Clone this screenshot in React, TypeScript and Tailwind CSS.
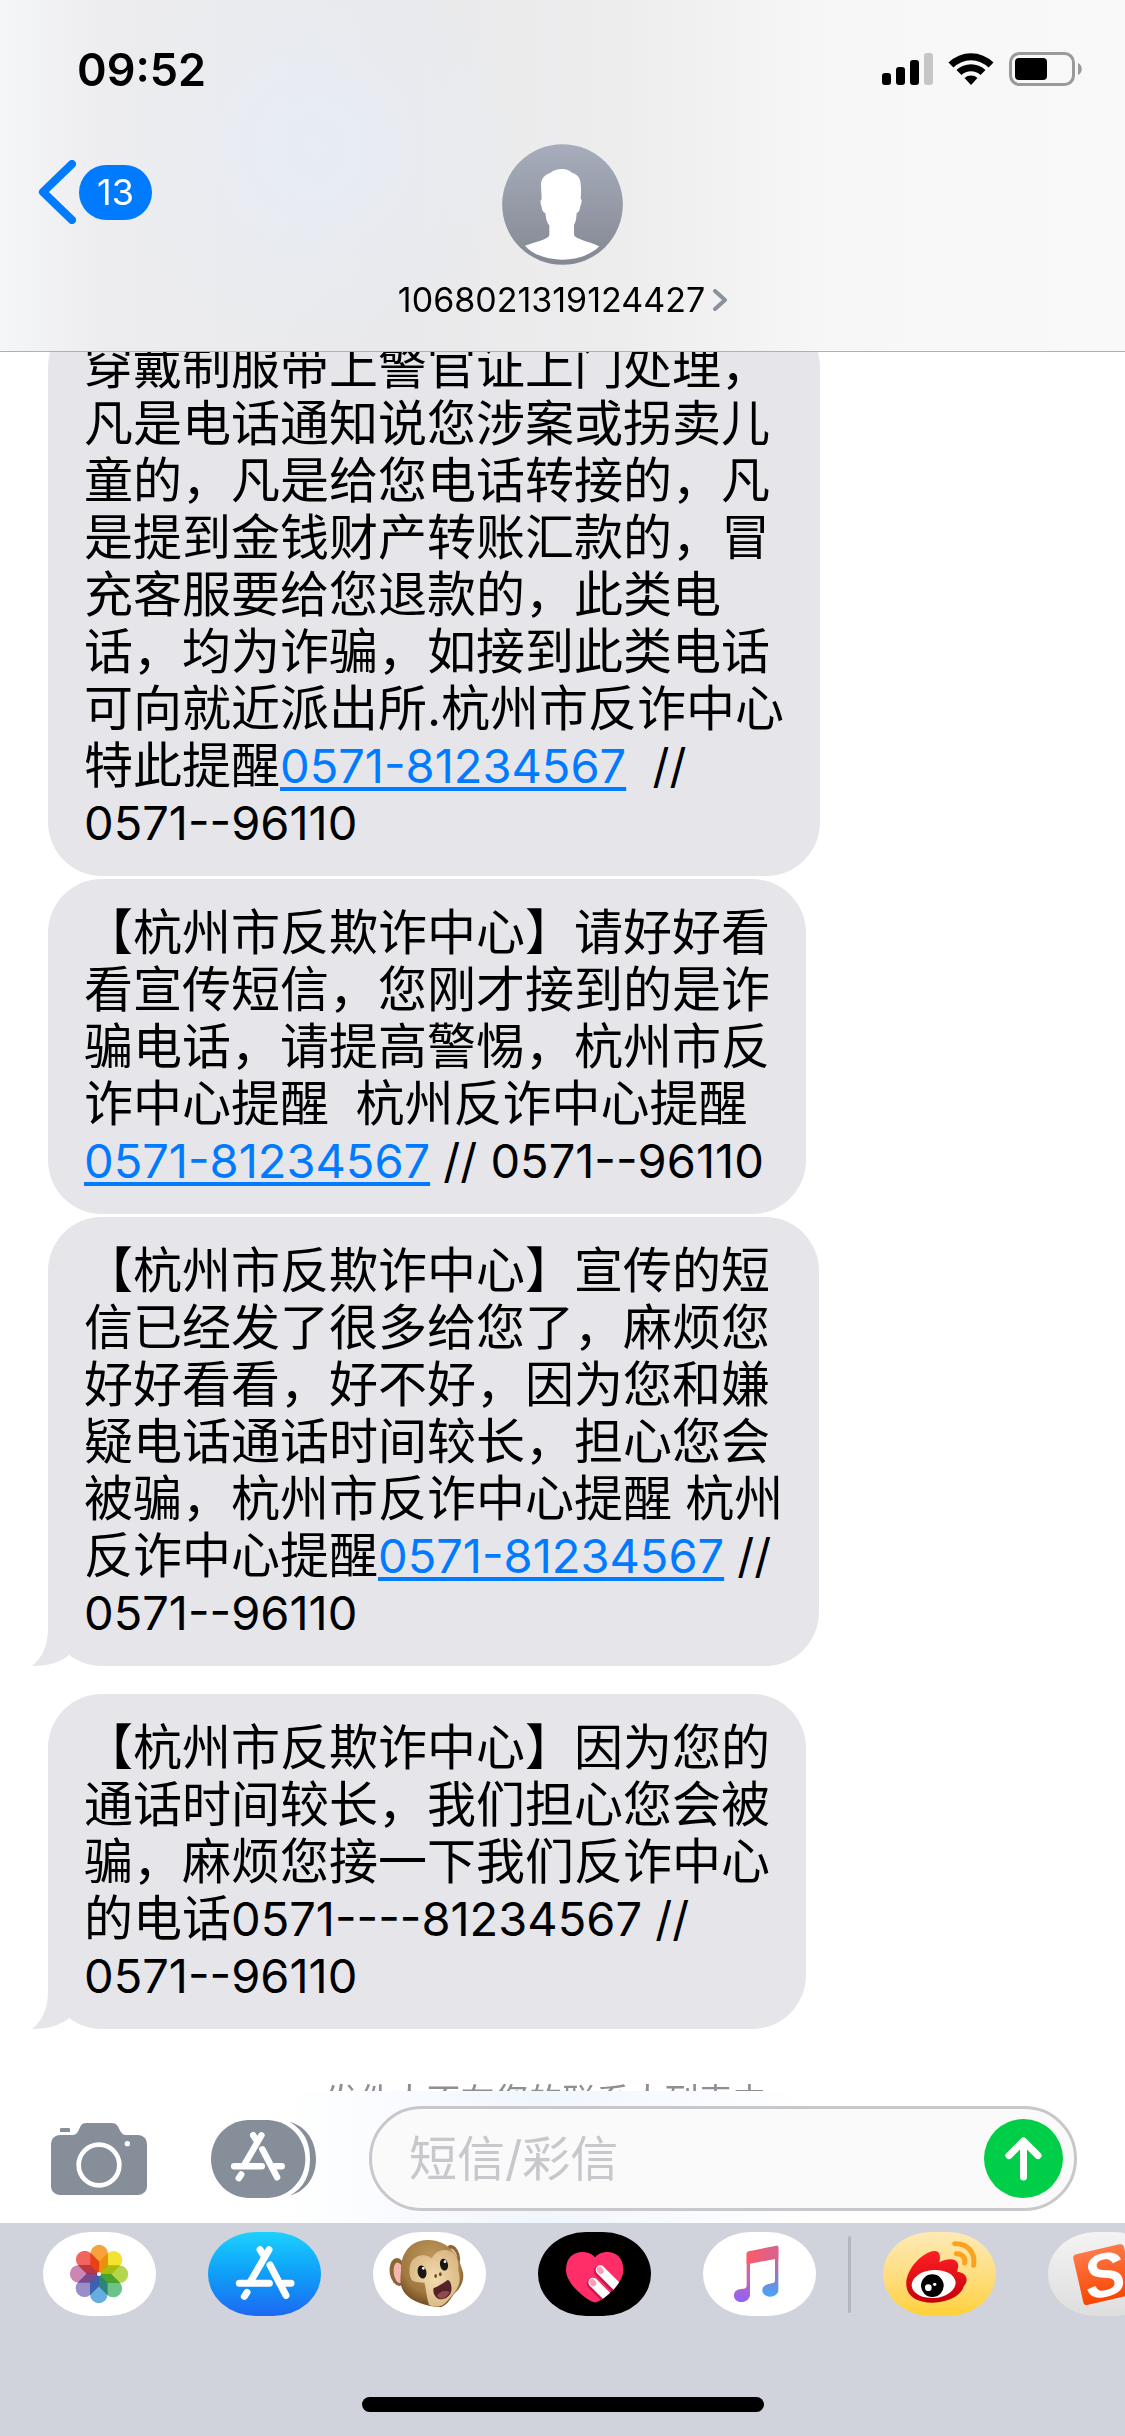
import React from 'react';

interface Message {
  id: string;
  lines: React.ReactNode[];
  hasTail?: boolean;
  className?: string;
}

interface DrawerApp {
  label: string;
  background: string;
  art: React.ReactNode;
}

const Num: React.FC<{ children: React.ReactNode }> = ({ children }) => (
  <span className="font-['Inter','Noto_Sans_CJK_SC',sans-serif] text-[47px]">{children}</span>
);

const PhoneLink: React.FC = () => (
  <a
    href="tel:0571-81234567"
    className="font-['Inter',sans-serif] text-[47px] text-[#007aff] underline decoration-4 underline-offset-4"
  >
    0571-81234567
  </a>
);

const MESSAGES: readonly Message[] = [
  {
    id: 'warning',
    className: 'mb-[3px]',
    lines: [
      '穿戴制服带上警官证上门处理，',
      '凡是电话通知说您涉案或拐卖儿',
      '童的，凡是给您电话转接的，凡',
      '是提到金钱财产转账汇款的，冒',
      '充客服要给您退款的，此类电',
      '话，均为诈骗，如接到此类电话',
      '可向就近派出所.杭州市反诈中心',
      <>特此提醒<PhoneLink /><Num>{'  //'}</Num></>,
      <Num>0571--96110</Num>
    ]
  },
  {
    id: 'notice',
    className: 'mb-[3px]',
    lines: [
      '【杭州市反欺诈中心】请好好看',
      '看宣传短信，您刚才接到的是诈',
      '骗电话，请提高警惕，杭州市反',
      <>诈中心提醒<Num>{'  '}</Num>杭州反诈中心提醒</>,
      <><PhoneLink /><Num>{' // 0571--96110'}</Num></>
    ]
  },
  {
    id: 'follow-up',
    hasTail: true,
    className: 'mb-7',
    lines: [
      '【杭州市反欺诈中心】宣传的短',
      '信已经发了很多给您了，麻烦您',
      '好好看看，好不好，因为您和嫌',
      '疑电话通话时间较长，担心您会',
      <>被骗，杭州市反诈中心提醒<Num> </Num>杭州</>,
      <>反诈中心提醒<PhoneLink /><Num>{' //'}</Num></>,
      <Num>0571--96110</Num>
    ]
  },
  {
    id: 'callback',
    hasTail: true,
    lines: [
      '【杭州市反欺诈中心】因为您的',
      '通话时间较长，我们担心您会被',
      '骗，麻烦您接一下我们反诈中心',
      <>的电话<Num>{'0571----81234567 //'}</Num></>,
      <Num>0571--96110</Num>
    ]
  }
];

const StatusIcons: React.FC = () => (
  <div className="flex items-center gap-[15px]">
    {/* Signal */}
    <svg className="w-[51px] h-[34px]" viewBox="0 0 51 34" aria-label="信号">
      <rect x="0" y="21" width="9" height="12" rx="3" />
      <rect x="14" y="15" width="9" height="18" rx="3" />
      <rect x="28" y="8" width="9" height="25" rx="3" />
      <rect x="42" y="1" width="9" height="32" rx="3" fill="#c6c6c7" />
    </svg>
    {/* Wi-Fi */}
    <svg className="w-[46px] h-[34px]" viewBox="0 0 46 34" aria-label="Wi-Fi">
      <path d="M0.5 10.5a32 32 0 0 1 45 0L40.500 15.500a25 25 0 0 0-35 0Z" />
      <path d="M8.500 18a21 21 0 0 1 29 0L32.500 23a14 14 0 0 0-19 0Z" />
      <path d="M16.500 26a10 10 0 0 1 13 0L23 33Z" />
    </svg>
    {/* Battery */}
    <svg className="w-[74px] h-[34px]" viewBox="0 0 74 34" aria-label="电量">
      <rect x="1.500" y="1.500" width="63" height="31" rx="9" fill="none" stroke="#999a9b" strokeWidth="3" />
      <rect x="6" y="6" width="32" height="22" rx="4" />
      <path d="M69 11c5 2 5 10 0 12Z" fill="#999a9b" />
    </svg>
  </div>
);

const Avatar: React.FC = () => (
  <svg className="w-[121px] h-[121px]" viewBox="0 0 363 363" aria-hidden="true">
    <defs>
      <linearGradient id="avatar" x1="0" y1="0" x2="0" y2="1">
        <stop offset="0" stopColor="#a7adbc" />
        <stop offset="1" stopColor="#848892" />
      </linearGradient>
    </defs>
    <circle cx="181.500" cy="181.500" r="181" fill="url(#avatar)" />
    <path
      d="M181 75c-14 0-28 4-37 12c-16 5-27 18-27 36l2 43c-6 3-3 14 0 24c1 9 4 16 11 17c3 20 4 28 12 37v28c0 13-38 20-73 33c24 28 70 42 113 42c44 0 85-15 110-40c-30-14-76-22-76-36v-28c7-12 7-24 8-36c8-2 9-10 11-20c4-10 6-20 1-22c2-26 2-52-5-64c-6-9-13-12-20-14c-9-8-18-12-30-12Z"
      fill="#fff"
    />
  </svg>
);

const CameraIcon: React.FC = () => (
  <svg className="w-24 h-[72px]" viewBox="0 0 288 216" aria-hidden="true">
    <path
      d="M26 36h38c18 0 18-16 25-27c4-7 9-9 17-9h76c9 0 14 3 18 9c8 13 10 27 25 27h37a26 26 0 0 1 26 26v127a26 26 0 0 1-26 27H26a26 26 0 0 1-26-27V62a26 26 0 0 1 26-26Z"
      fill="#868e99"
    />
    <path d="M27 27V19q0-4 4-4h22q4 0 4 4v8Z" fill="#868e99" />
    <circle cx="144" cy="126" r="61" fill="none" stroke="#fff" strokeWidth="14" />
    <circle cx="229" cy="62" r="8" fill="#fff" />
  </svg>
);

const StoreMark: React.FC = () => (
  <g fill="none" stroke="#fff" strokeWidth="21" strokeLinecap="round">
    <path d="M183 53L128 148M156 53l11 17" />
    <path d="M94 154H184" />
    <path d="M226 154h23" />
    <path d="M186 99L234 190" />
    <path d="M117 181l-8 12" />
  </g>
);

const AppsIcon: React.FC = () => (
  <svg className="w-[105px] h-[78px]" viewBox="0 0 315 234" aria-hidden="true">
    <path d="M110 0h62C238 4 283 56 283 117S238 230 172 234h-62C45 230 0 178 0 117S45 4 110 0Z" fill="#868e99" />
    <path d="M237 6C288 20 315 66 315 117S288 212 237 227C280 202 297 166 297 117S280 32 237 6Z" fill="#868e99" />
    <g transform="translate(-17 -3) scale(0.92)">
      <StoreMark />
    </g>
  </svg>
);

const PETALS = ['#f7a23a', '#f3e230', '#b3d54f', '#6cc389', '#66aee0', '#998dca', '#cb86b4', '#f0665f'];

const PhotosArt = (
  <g className="isolate">
    {PETALS.map((color, index) => (
      <path
        key={color}
        d="M168 126L142 100V65a26 26 0 0 1 53 0v35Z"
        fill={color}
        transform={`rotate(${index * 45} 168 126)`}
        className="mix-blend-multiply"
      />
    ))}
    <circle cx="168" cy="126" r="6" fill="#fff" />
  </g>
);

const MonkeyArt = (
  <g>
    <defs>
      <radialGradient id="fur" cx="0.5" cy="0.3" r="0.7">
        <stop offset="0" stopColor="#c19a5f" />
        <stop offset="0.7" stopColor="#a07840" />
        <stop offset="1" stopColor="#6f4a20" />
      </radialGradient>
      <radialGradient id="face" cx="0.5" cy="0.5" r="0.6">
        <stop offset="0" stopColor="#f3dcae" />
        <stop offset="1" stopColor="#d7b580" />
      </radialGradient>
    </defs>
    <ellipse cx="75" cy="120" rx="25" ry="42" fill="#8c6635" transform="rotate(-8 75 120)" />
    <ellipse cx="77" cy="122" rx="15" ry="31" fill="#f2b5b0" transform="rotate(-8 77 122)" />
    <ellipse cx="240" cy="72" rx="20" ry="34" fill="#8c6635" transform="rotate(-16 240 72)" />
    <ellipse cx="240" cy="74" rx="12" ry="25" fill="#f2b5b0" transform="rotate(-16 240 74)" />
    <path
      d="M162 24C110 26 82 66 84 118c-4 30-2 52 16 70c18 20 60 36 104 37c20-6 30-28 42-42c20-18 28-42 24-62c-6-24-14-44-30-62c-20-24-46-36-78-35Z"
      fill="url(#fur)"
    />
    <path
      d="M176 80c-14-16-46-14-60 8c-10 18-8 44 0 56c10 8 28 8 38 8c6 20 6 44 14 66c12 8 34 8 46-2c14-14 34-34 42-54c8-20 2-36 0-52c2-26-6-48-28-54c-22-6-42 4-52 24Z"
      fill="url(#face)"
    />
    <ellipse cx="147" cy="120" rx="13" ry="20" fill="#1b1715" transform="rotate(-12 147 120)" />
    <ellipse cx="213" cy="98" rx="12" ry="18" fill="#1b1715" transform="rotate(-12 213 98)" />
    <circle cx="151" cy="109" r="4" fill="#fff" />
    <circle cx="216" cy="89" r="4" fill="#fff" />
    <ellipse cx="188" cy="132" rx="4" ry="6" fill="#6a4b2b" />
    <ellipse cx="202" cy="127" rx="4" ry="6" fill="#6a4b2b" />
    <path d="M182 168c12-4 28-14 42-24c10 2 14 22 10 36c-4 14-18 22-32 22c-16-2-24-22-20-34Z" fill="#55222a" />
    <path d="M192 190c10-12 24-16 38-10c-6 14-18 20-28 20c-5-2-8-5-10-10Z" fill="#8e4a50" />
  </g>
);

const HEART = 'M171 76C154 52 84 48 84 114C84 156 144 202 164 209q7 3 14 0C198 202 256 156 256 114C256 48 188 52 171 76Z';

const HeartArt = (
  <g>
    <clipPath id="heart">
      <path d={HEART} />
    </clipPath>
    <path d={HEART} fill="#ff2d68" />
    <g clipPath="url(#heart)" strokeLinecap="round">
      <path d="M184 118L250 184M163 155L229 221" stroke="#c8184e" strokeWidth="34" />
      <path d="M187 114L250 177M165 151L229 215" stroke="#fff" strokeWidth="28" />
      <path d="M185 113l3 4M163 150l3 4" stroke="#ff9fbd" strokeWidth="18" />
    </g>
  </g>
);

const MusicArt = (
  <g>
    <defs>
      <linearGradient id="noteLeft" x1="0" y1="41" x2="0" y2="210" gradientUnits="userSpaceOnUse">
        <stop offset="0.2" stopColor="#f95d6e" />
        <stop offset="0.6" stopColor="#c964b0" />
        <stop offset="1" stopColor="#8a62ff" />
      </linearGradient>
      <linearGradient id="noteRight" x1="0" y1="41" x2="0" y2="195" gradientUnits="userSpaceOnUse">
        <stop offset="0" stopColor="#ee5c78" />
        <stop offset="0.5" stopColor="#9a76bd" />
        <stop offset="1" stopColor="#42a6fd" />
      </linearGradient>
      <linearGradient id="noteBeam" x1="0" y1="0" x2="1" y2="0">
        <stop offset="0" stopColor="#fa5c68" />
        <stop offset="1" stopColor="#d8628f" />
      </linearGradient>
    </defs>
    <path d="M131 64h10v124c0 12-12 22-26 22c-13 0-22-8-22-19c0-14 10-19 22-20c12-1 16-3 16-11Z" fill="url(#noteLeft)" />
    <path d="M216 46h10v128c0 12-11 20-25 20c-13 0-23-8-23-19c0-12 10-18 22-20c12-1 16-3 16-11Z" fill="url(#noteRight)" />
    <path d="M131 95V65q0-6 6-7L220 41q6-1 6 5V82l-9-1L141 95Z" fill="url(#noteBeam)" />
  </g>
);

const WeiboArt = (
  <g>
    <defs>
      <linearGradient id="weibo" x1="0" y1="0" x2="0" y2="1">
        <stop offset="0" stopColor="#ff2027" />
        <stop offset="1" stopColor="#c50008" />
      </linearGradient>
    </defs>
    <path
      d="M70 160C66 120 110 64 152 57c18-2 22 14 17 34c22-12 50-14 56 4c3 9-3 16-2 24c16 2 28 10 28 24c0 8-4 14-9 20C236 190 196 212 148 212C104 212 72 194 70 160Z"
      fill="url(#weibo)"
    />
    <ellipse cx="152" cy="156" rx="66" ry="42" fill="#fff" transform="rotate(-5 152 156)" />
    <circle cx="148" cy="161" r="34" />
    <circle cx="136" cy="167" r="10" fill="#fff" />
    <circle cx="155" cy="157" r="5" fill="#fff" />
    <g fill="none" stroke="#fca21f" strokeWidth="15" strokeLinecap="round">
      <path d="M215 35C252 33 278 60 272 100" />
      <path d="M220 65c17-1 29 12 25 28" />
    </g>
  </g>
);

const SogouArt = (
  <g transform="rotate(-13 166 128)">
    <defs>
      <linearGradient id="sogou" x1="0" y1="0" x2="0" y2="1">
        <stop offset="0" stopColor="#ff7848" />
        <stop offset="1" stopColor="#f74600" />
      </linearGradient>
    </defs>
    <rect x="89" y="50" width="156" height="156" rx="12" fill="url(#sogou)" />
    <text
      x="168"
      y="193"
      textAnchor="middle"
      fill="#fff"
      className="font-['Liberation_Sans',Arial,sans-serif] text-[184px] font-bold italic"
    >
      S
    </text>
  </g>
);

const BUILT_IN_APPS: readonly DrawerApp[] = [
  { label: '照片', background: 'bg-white', art: PhotosArt },
  { label: 'App Store', background: 'bg-linear-to-b from-[#1fd0fd] to-[#1d68f1]', art: <StoreMark /> },
  { label: '拟我表情', background: 'bg-white', art: MonkeyArt },
  { label: 'Digital Touch', background: 'bg-black', art: HeartArt },
  { label: '音乐', background: 'bg-white', art: MusicArt }
];

const INSTALLED_APPS: readonly DrawerApp[] = [
  { label: '微博', background: 'bg-linear-to-b from-[#fdeab5] to-[#ffd133]', art: WeiboArt },
  { label: '搜狗输入法', background: 'bg-linear-to-b from-[#f3f3f3] to-[#dedede]', art: SogouArt }
];

const AppButtons: React.FC<{ apps: readonly DrawerApp[] }> = ({ apps }) => (
  <div className="flex shrink-0 gap-[52px]">
    {apps.map((app) => (
      <button
        key={app.label}
        type="button"
        aria-label={app.label}
        className={`w-[113px] h-[84px] shrink-0 overflow-hidden rounded-[48px/42px] ${app.background}`}
      >
        <svg className="w-full h-full" viewBox="0 0 339 252" aria-hidden="true">
          {app.art}
        </svg>
      </button>
    ))}
  </div>
);

const Bubble: React.FC<{ message: Message }> = ({ message }) => (
  <article
    className={`relative w-fit rounded-[54px] bg-[#e5e5ea] px-[36px] py-[25px] text-[49px] leading-[57px] ${message.className ?? ''}`}
  >
    {message.lines.map((line, index) => (
      <p key={index} className="h-[57px] whitespace-pre">{line}</p>
    ))}
    {message.hasTail && (
      <svg className="absolute -left-4 bottom-0 w-[60px] h-[60px]" viewBox="0 0 60 60" aria-hidden="true">
        <path d="M16 0V22C16 40 10 52 0 60C14 60 28 57 37 49L46 0Z" fill="#e5e5ea" />
      </svg>
    )}
  </article>
);

const App: React.FC = () => {
  return (
    <div
      lang="zh-CN"
      className="flex h-screen flex-col overflow-hidden bg-white font-['Inter','Noto_Sans_CJK_SC',sans-serif] text-black"
    >
      <header className="shrink-0 border-b border-[#b0b0b3] bg-[radial-gradient(circle_at_28%_42%,#e7ecf5_0%,#e7ecf500_24%),linear-gradient(90deg,#f5f6f7_0%,#ededef_9%,#e9e9eb_35%,#ededee_55%,#f7f7f8_74%,#f9f9f9_100%)]">
        {/* Status bar */}
        <div className="flex h-[138px] items-center justify-between pl-[77px] pr-[42px]">
          <time className="text-[45px] font-semibold leading-none">09:52</time>
          <StatusIcons />
        </div>

        {/* Conversation bar */}
        <div className="grid grid-cols-[1fr_auto_1fr] items-start pt-[6px] pb-[28px]">
          <button type="button" aria-label="返回" className="mt-4 ml-[37px] flex items-center gap-[3px] justify-self-start">
            <svg className="w-[39px] h-[64px]" viewBox="0 0 39 64" fill="none" aria-hidden="true">
              <path d="M35 4L6 32L35 60" stroke="#007aff" strokeWidth="8" strokeLinecap="round" strokeLinejoin="round" />
            </svg>
            <span className="flex h-[55px] w-[73px] items-center justify-center rounded-full bg-[#007aff] text-[36px] leading-none text-white">
              13
            </span>
          </button>
          <button type="button" className="flex flex-col items-center">
            <Avatar />
            <span className="mt-3 flex items-center gap-2 text-[34px] leading-[46px]">
              1068021319124427
              <svg className="w-[14px] h-[22px]" viewBox="0 0 14 22" fill="none" aria-hidden="true">
                <path d="M2 2L12 11L2 20" stroke="#8b929c" strokeWidth="4" strokeLinecap="round" strokeLinejoin="round" />
              </svg>
            </span>
          </button>
        </div>
      </header>

      <main className="min-h-0 flex-1 overflow-hidden">
        {/* Scrolled so that the first bubble runs under the header */}
        <div className="-mt-[39px] pl-12">
          {MESSAGES.map((message) => (
            <Bubble key={message.id} message={message} />
          ))}
        </div>
        <p className="mt-12 text-center text-[34px] leading-[48px] text-[#8e8e93]">发件人不在您的联系人列表中。</p>
      </main>

      {/* Composer */}
      <form
        className="flex shrink-0 items-center bg-[linear-gradient(90deg,#ffffff_25%,#f1f6fd_48%,#ffffff_72%)] pt-[15px] pb-3 pl-[51px] pr-12"
        onSubmit={(event) => event.preventDefault()}
      >
        <button type="button" aria-label="相机" className="shrink-0">
          <CameraIcon />
        </button>
        <button type="button" aria-label="App" className="ml-16 shrink-0">
          <AppsIcon />
        </button>
        <div className="ml-[53px] flex h-[105px] min-w-0 flex-1 items-center rounded-full border-[3px] border-[#c7c7cc] bg-[#fafafa] pl-[37px] pr-[11px]">
          <input
            type="text"
            aria-label="短信/彩信"
            placeholder="短信/彩信"
            className="min-w-0 flex-1 bg-transparent text-[48px] leading-[60px] outline-none placeholder:text-[#c7c7cc]"
          />
          <button type="submit" aria-label="发送" className="flex h-[79px] w-[79px] shrink-0 items-center justify-center rounded-full bg-[#00ce48]">
            <svg className="w-[37px] h-[44px]" viewBox="0 0 37 44" fill="none" aria-hidden="true">
              <path d="M18.500 40V4M4 18.500L18.500 4L33 18.500" stroke="#fff" strokeWidth="7" strokeLinecap="round" strokeLinejoin="round" />
            </svg>
          </button>
        </div>
      </form>

      {/* App drawer */}
      <footer className="flex shrink-0 flex-col items-center overflow-hidden bg-[#d0d3db] pt-[9px] pb-6">
        <nav aria-label="App" className="flex w-full items-center gap-8 pl-[43px]">
          <AppButtons apps={BUILT_IN_APPS} />
          <div className="h-[77px] w-[3px] shrink-0 rounded-full bg-[#b3b6bc]" />
          <AppButtons apps={INSTALLED_APPS} />
        </nav>
        <div className="mt-[81px] h-[15px] w-[402px] rounded-full bg-black" />
      </footer>
    </div>
  );
};

export default App;
